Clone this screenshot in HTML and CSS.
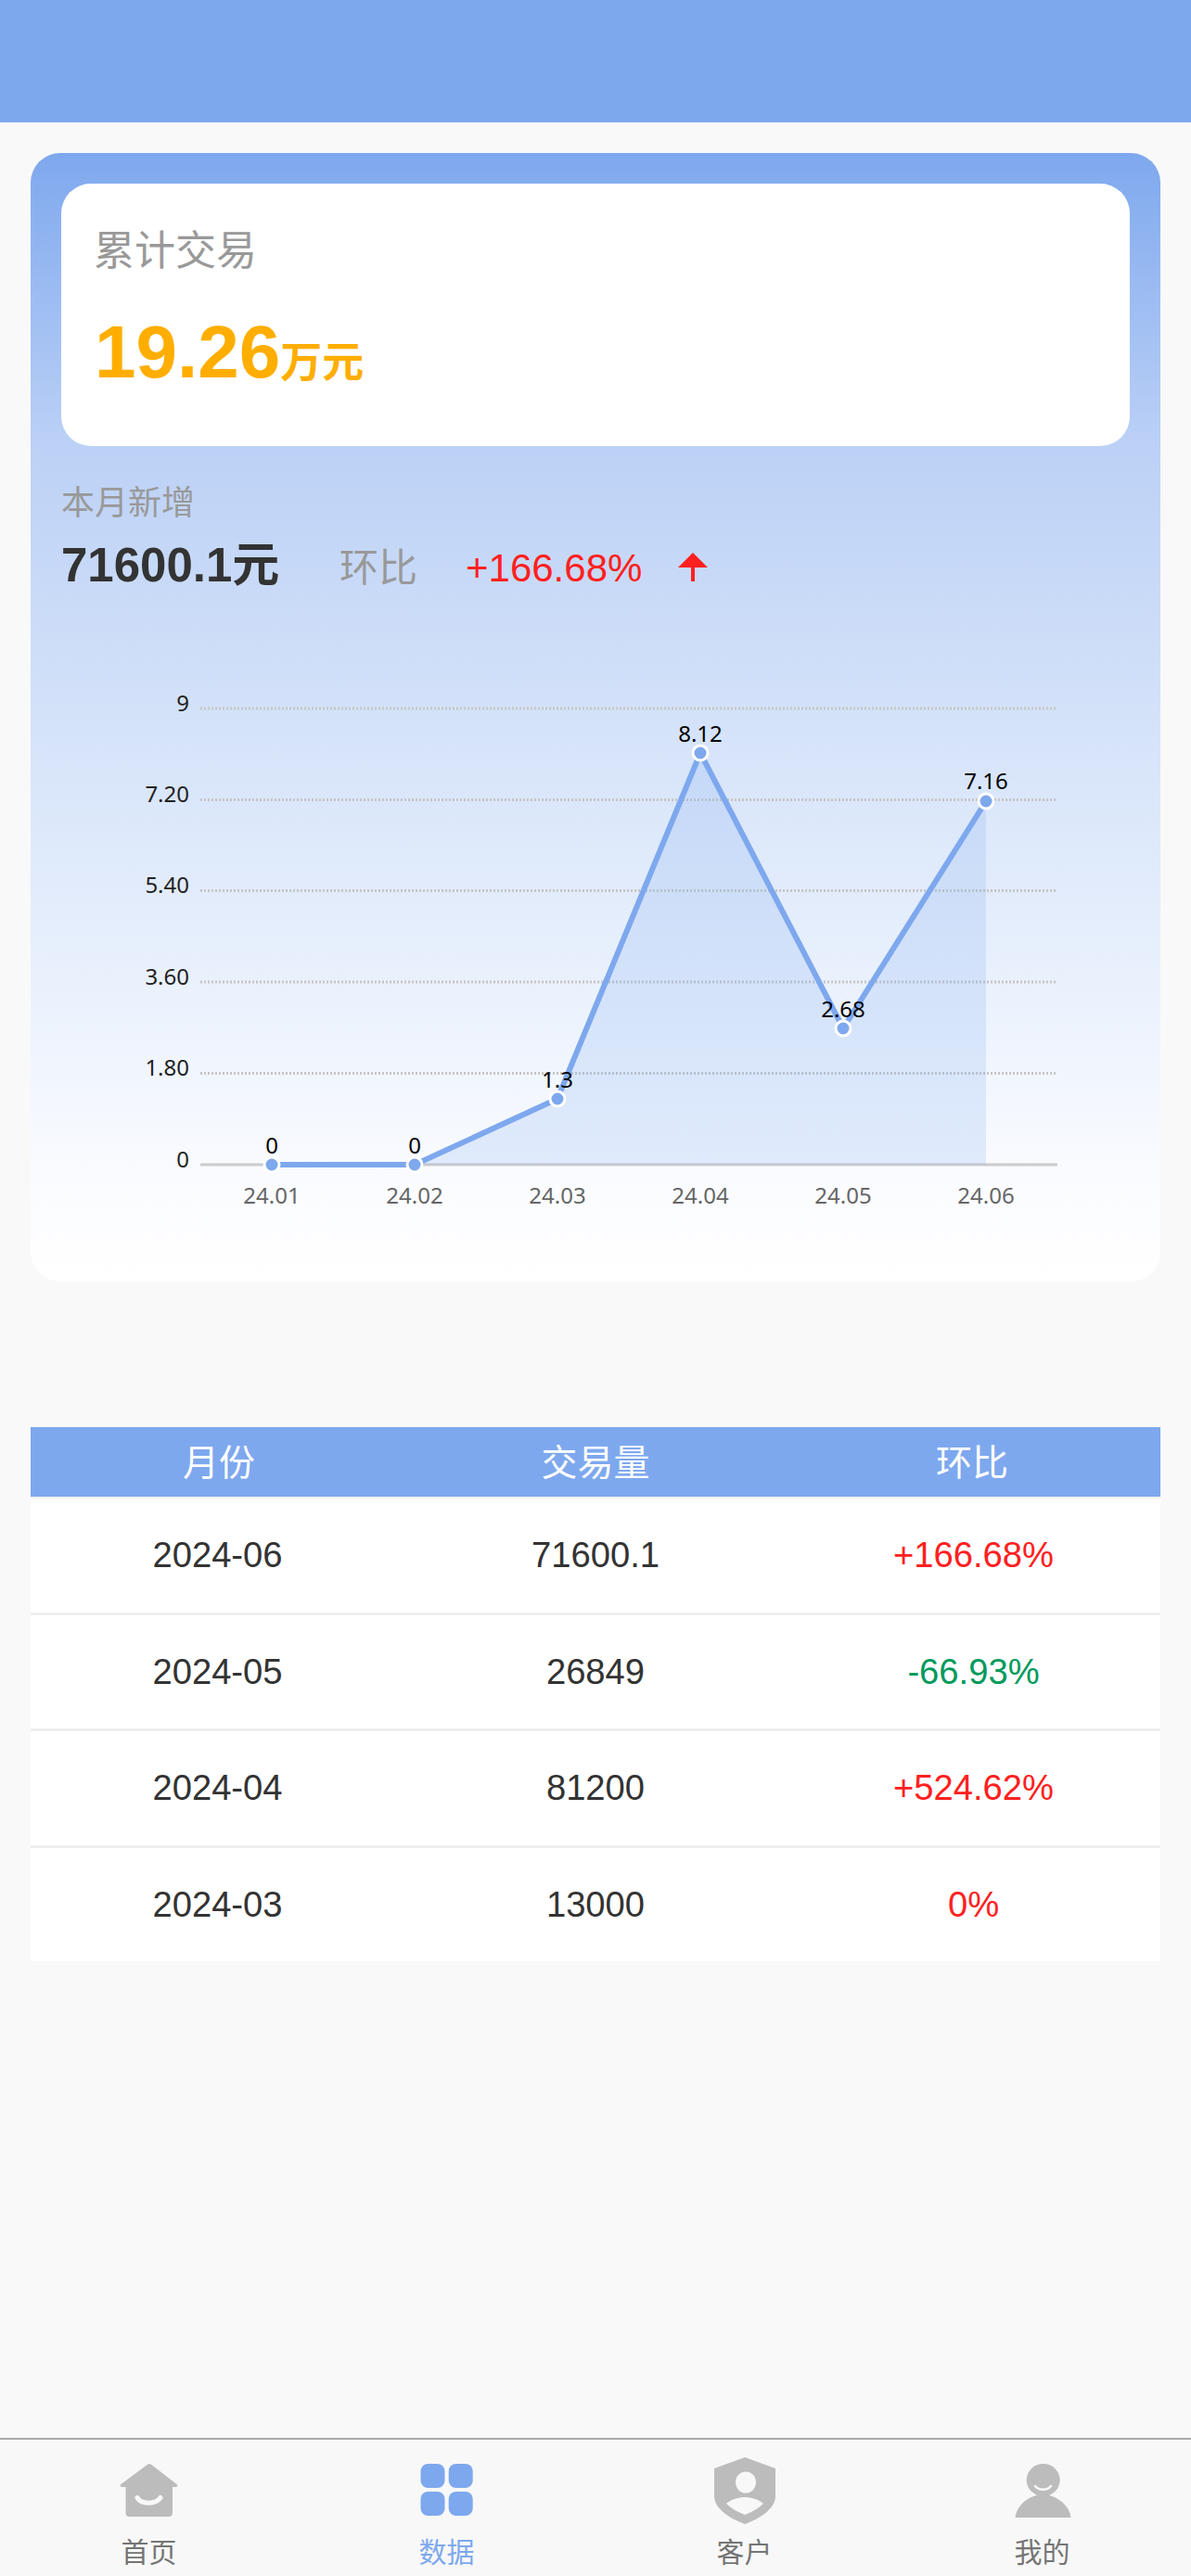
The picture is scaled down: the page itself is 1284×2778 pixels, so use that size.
FILE: index.html
```html
<!DOCTYPE html>
<html lang="zh-CN">
<head>
    <meta charset="UTF-8">
    <meta name="viewport" content="width=device-width, initial-scale=1.0">
    <title>数据</title>
    <link rel="stylesheet" href="styles.css">
</head>
<body>
    <div class="top-bar"></div>

    <main class="content">
        <section class="panel">
            <div class="total-box">
                <div class="total-title">累计交易</div>
                <div class="total-value">19.26<span class="total-unit">万元</span></div>
            </div>

            <div class="month-title">本月新增</div>
            <div class="month-row">
                <span class="month-value">71600.1元</span>
                <span class="month-label">环比</span>
                <span class="month-rate">+166.68%</span>
                <svg class="month-arrow" width="32" height="31" viewBox="0 0 32 31">
                    <path d="M16 0 L32 16 H18 V31 H14 V16 H0 Z"></path>
                </svg>
            </div>

            <svg class="chart" width="1152" height="640" viewBox="66 700 1152 640">
                <line class="grid-line" x1="216" y1="764" x2="1138" y2="764"></line>
                <line class="grid-line" x1="216" y1="862.5" x2="1138" y2="862.5"></line>
                <line class="grid-line" x1="216" y1="960.5" x2="1138" y2="960.5"></line>
                <line class="grid-line" x1="216" y1="1059" x2="1138" y2="1059"></line>
                <line class="grid-line" x1="216" y1="1157.5" x2="1138" y2="1157.5"></line>
                <line class="axis-line" x1="216" y1="1256" x2="1140" y2="1256"></line>

                <text class="y-label" x="204" y="767">9</text>
                <text class="y-label" x="204" y="865">7.20</text>
                <text class="y-label" x="204" y="963">5.40</text>
                <text class="y-label" x="204" y="1062">3.60</text>
                <text class="y-label" x="204" y="1160">1.80</text>
                <text class="y-label" x="204" y="1259">0</text>

                <polygon class="area" points="293,1256 447,1256 601,1185 755,812 909,1109 1063,864 1063,1256"></polygon>
                <polyline class="line" points="293,1256 447,1256 601,1185 755,812 909,1109 1063,864"></polyline>

                <circle class="dot" cx="293" cy="1256" r="8"></circle>
                <circle class="dot" cx="447" cy="1256" r="8"></circle>
                <circle class="dot" cx="601" cy="1185" r="8"></circle>
                <circle class="dot" cx="755" cy="812" r="8"></circle>
                <circle class="dot" cx="909" cy="1109" r="8"></circle>
                <circle class="dot" cx="1063" cy="864" r="8"></circle>

                <text class="point-label" x="293" y="1244">0</text>
                <text class="point-label" x="447" y="1244">0</text>
                <text class="point-label" x="601" y="1173">1.3</text>
                <text class="point-label" x="755" y="800">8.12</text>
                <text class="point-label" x="909" y="1097">2.68</text>
                <text class="point-label" x="1063" y="851">7.16</text>

                <text class="x-label" x="293" y="1298">24.01</text>
                <text class="x-label" x="447" y="1298">24.02</text>
                <text class="x-label" x="601" y="1298">24.03</text>
                <text class="x-label" x="755" y="1298">24.04</text>
                <text class="x-label" x="909" y="1298">24.05</text>
                <text class="x-label" x="1063" y="1298">24.06</text>
            </svg>
        </section>

        <section class="table">
            <div class="table-head">
                <div>月份</div>
                <div>交易量</div>
                <div>环比</div>
            </div>
            <div class="table-row">
                <div class="month-cell">2024-06</div>
                <div>71600.1</div>
                <div class="up">+166.68%</div>
            </div>
            <div class="table-row">
                <div class="month-cell">2024-05</div>
                <div>26849</div>
                <div class="down">-66.93%</div>
            </div>
            <div class="table-row">
                <div class="month-cell">2024-04</div>
                <div>81200</div>
                <div class="up">+524.62%</div>
            </div>
            <div class="table-row">
                <div class="month-cell">2024-03</div>
                <div>13000</div>
                <div class="up">0%</div>
            </div>
        </section>
    </main>

    <nav class="tab-bar">
        <div class="tab">
            <svg class="tab-icon" width="72" height="72" viewBox="0 0 72 72">
                <path class="icon-fill" d="M34 7.8 a3 3 0 0 1 4 0 L65.5 29 a1.6 1.6 0 0 1 -1 3 H61 V60 a4 4 0 0 1 -4 4 H14.5 a4 4 0 0 1 -4 -4 V32 H6.5 a1.6 1.6 0 0 1 -1 -3 Z"></path>
                <path class="icon-cut" d="M23 43.5 C27 51 43 51 48 43.5"></path>
            </svg>
            <span class="tab-text">首页</span>
        </div>
        <div class="tab tab-active">
            <svg class="tab-icon" width="72" height="72" viewBox="0 0 72 72">
                <rect class="icon-active" x="7.5" y="7" width="26" height="26" rx="8"></rect>
                <rect class="icon-active" x="37.7" y="7" width="26" height="26" rx="8"></rect>
                <rect class="icon-active" x="7.5" y="37" width="26" height="26" rx="8"></rect>
                <rect class="icon-active" x="37.7" y="37" width="26" height="26" rx="8"></rect>
            </svg>
            <span class="tab-text">数据</span>
        </div>
        <div class="tab">
            <svg class="tab-icon" width="72" height="72" viewBox="0 0 72 72">
                <path class="icon-fill" d="M36 0 L69 12 V42 C69 56 50 67 36 72 C22 67 3 56 3 42 V12 Z"></path>
                <ellipse class="icon-hole" cx="37" cy="27" rx="11" ry="11.5"></ellipse>
                <path class="icon-hole" d="M16 50 C22 45 29 43 36 43 C43 43 50 45 56 50 C51 55 44 59 36 62 C28 59 21 55 16 50 Z"></path>
            </svg>
            <span class="tab-text">客户</span>
        </div>
        <div class="tab">
            <svg class="tab-icon" width="72" height="72" viewBox="0 0 72 72">
                <ellipse class="icon-fill" cx="36.7" cy="24.5" rx="18" ry="17.5"></ellipse>
                <path class="icon-fill" d="M6.5 65 C8 52 20 41 36.5 40 C52 41 65 52 66.5 65 Z"></path>
                <path class="icon-smile" d="M28 31 C32 36 41 36 45 31"></path>
            </svg>
            <span class="tab-text">我的</span>
        </div>
    </nav>
</body>
</html>
```

FILE: styles.css
```css
body {
    margin: 0;
    height: 2778px;
    display: flex;
    flex-direction: column;
    overflow: hidden;
    font-family: "Liberation Sans", "Noto Sans CJK SC", sans-serif;
    background-color: #f9f9f9;
    color: #333;
}

.top-bar {
    height: 132px;
    flex-shrink: 0;
    background-color: #7ea8ee;
}

.content {
    flex: 1;
    padding: 33px 33px 0;
}

.panel {
    height: 1217px;
    box-sizing: border-box;
    padding: 33px;
    border-radius: 32px;
    background: linear-gradient(to bottom, #7ea8ee 0%, #bcd1f6 26%, #d4e2f9 50%, #ebf2fd 75%, #fbfcff 92%, #ffffff 100%);
}

.total-box {
    height: 283px;
    box-sizing: border-box;
    padding: 47px 35px 0;
    border-radius: 32px;
    background-color: #fff;
}

.total-title {
    font-size: 44px;
    line-height: 52px;
    color: #999;
}

.total-value {
    margin-top: 35px;
    margin-left: 1px;
    font-size: 80px;
    line-height: 96px;
    font-weight: bold;
    color: #ffae00;
}

.total-unit {
    font-size: 45px;
}

.month-title {
    margin-top: 37px;
    font-size: 36px;
    line-height: 50px;
    color: #999;
}

.month-row {
    display: flex;
    align-items: baseline;
    height: 60px;
    margin-top: 12px;
    line-height: 60px;
}

.month-value {
    width: 300px;
    font-size: 51px;
    font-weight: bold;
}

.month-label {
    width: 136px;
    font-size: 42px;
    color: #999;
}

.month-rate {
    width: 229px;
    font-size: 42px;
    color: #ff2020;
}

.month-arrow {
    align-self: flex-start;
    margin-top: 16px;
}

.month-arrow path {
    fill: #ff2020;
}

.chart {
    display: block;
    margin-top: 60px;
}

.grid-line {
    stroke: #c6c6c6;
    stroke-width: 3;
    stroke-dasharray: 2 2;
}

.axis-line {
    stroke: #ccc;
    stroke-width: 3;
}

.area {
    fill: #7ea8ee;
    opacity: 0.2;
}

.line {
    fill: none;
    stroke: #7ea8ee;
    stroke-width: 6;
}

.dot {
    fill: #7ea8ee;
    stroke: #fff;
    stroke-width: 3;
}

.y-label,
.point-label,
.x-label {
    font-family: "Noto Sans", sans-serif;
    font-size: 24px;
}

.y-label {
    text-anchor: end;
    fill: #222;
}

.point-label {
    text-anchor: middle;
    fill: #000;
}

.x-label {
    text-anchor: middle;
    fill: #666;
}

.table {
    margin-top: 157px;
}

.table-head,
.table-row {
    display: grid;
    grid-template-columns: repeat(3, 1fr);
    align-items: center;
    text-align: center;
}

.table-head {
    height: 69px;
    padding-bottom: 6px;
    border-bottom: 2px solid #f0f0f0;
    font-size: 39px;
    color: #fff;
    background-color: #7ea8ee;
}

.table-row {
    height: 125.5px;
    box-sizing: border-box;
    border-bottom: 3px solid #eee;
    font-size: 38.2px;
    background-color: #fff;
}

.table-row:last-child {
    height: 122.5px;
    border-bottom: 0;
}

.month-cell {
    padding-right: 3px;
}

.up,
.down {
    padding-left: 3px;
}

.up {
    color: #ff2020;
}

.down {
    color: #009a5c;
}

.tab-bar {
    display: grid;
    grid-template-columns: repeat(4, 1fr);
    height: 149px;
    flex-shrink: 0;
    box-sizing: border-box;
    padding-top: 19px;
    border-top: 2px solid #aaa;
    background-color: #f8f8f8;
}

.tab {
    display: flex;
    flex-direction: column;
    align-items: center;
}

.tab-icon {
    display: block;
}

.tab-text {
    margin-top: 10px;
    font-size: 30px;
    line-height: 42px;
    color: #757575;
}

.tab-active .tab-text {
    color: #7ea8ee;
}

.icon-fill {
    fill: #bcbcbc;
}

.icon-active {
    fill: #7ea8ee;
}

.icon-hole {
    fill: #f8f8f8;
}

.icon-cut {
    fill: none;
    stroke: #f8f8f8;
    stroke-width: 5;
    stroke-linecap: round;
}

.icon-smile {
    fill: none;
    stroke: #f8f8f8;
    stroke-width: 2.5;
    stroke-linecap: round;
}
```
